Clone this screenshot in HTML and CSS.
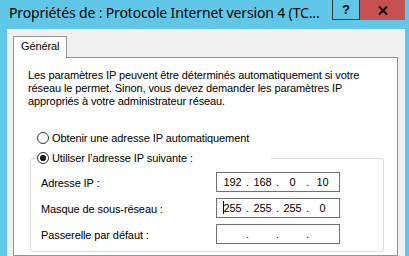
FILE: index.html
```html
<!DOCTYPE html>
<html lang="fr">
<head>
<meta charset="utf-8">
<title>Propriétés</title>
<link rel="stylesheet" href="styles.css">
</head>
<body>
<div class="window">
  <div class="titlebar">
    <div class="title">Propriétés de : Protocole Internet version 4 (TC...</div>
    <div class="buttons">
      <div class="btn help">?</div>
      <div class="btn close">
        <svg width="10" height="9" viewBox="0 0 10 9"><path d="M1 0.5 L9 8.5 M9 0.5 L1 8.5" stroke="#000" stroke-width="2" fill="none"/></svg>
      </div>
    </div>
  </div>
  <div class="client">
    <div class="tabs"><div class="tab">Général</div></div>
    <div class="page">
      <p class="intro">Les paramètres IP peuvent être déterminés automatiquement si votre<br>réseau le permet. Sinon, vous devez demander les paramètres IP<br>appropriés à votre administrateur réseau.</p>
      <div class="radio-row first"><span class="radio"></span><span>Obtenir une adresse IP automatiquement</span></div>
      <fieldset class="group">
        <legend class="legend"><span class="radio-row"><span class="radio checked"></span><span>Utiliser l’adresse IP suivante :</span></span></legend>
        <div class="field">
          <span class="label">Adresse IP :</span>
          <div class="ipbox"><span class="seg">192</span><span class="dot">.</span><span class="seg">168</span><span class="dot">.</span><span class="seg">0</span><span class="dot">.</span><span class="seg">10</span></div>
        </div>
        <div class="field">
          <span class="label">Masque de sous-réseau :</span>
          <div class="ipbox"><span class="seg"><span class="caret"></span>255</span><span class="dot">.</span><span class="seg">255</span><span class="dot">.</span><span class="seg">255</span><span class="dot">.</span><span class="seg">0</span></div>
        </div>
        <div class="field">
          <span class="label">Passerelle par défaut :</span>
          <div class="ipbox"><span class="seg"></span><span class="dot">.</span><span class="seg"></span><span class="dot">.</span><span class="seg"></span><span class="dot">.</span><span class="seg"></span></div>
        </div>
      </fieldset>
    </div>
  </div>
</div>
</body>
</html>
```
FILE: styles.css
```css
* { box-sizing: border-box; }
html, body { margin: 0; padding: 0; }
body {
  width: 409px;
  height: 256px;
  overflow: hidden;
  background: #60c7e8;
  font-family: "Liberation Sans", Arial, sans-serif;
  font-size: 11px;
  letter-spacing: -0.1px;
  color: #000;
}
.window {
  width: 409px;
  height: 256px;
  background: #60c7e8;
  display: flex;
  flex-direction: column;
  padding: 0 4px 0 7px;
}
.titlebar {
  height: 29px;
  flex: none;
  display: flex;
  align-items: flex-start;
  justify-content: space-between;
}
.title {
  font-family: "Noto Sans", "Liberation Sans", sans-serif;
  font-size: 14px;
  letter-spacing: -0.15px;
  line-height: 20px;
  padding: 3px 0 0 2px;
  white-space: nowrap;
  color: #000;
}
.buttons { display: flex; }
.btn {
  height: 20px;
  display: flex;
  align-items: center;
  justify-content: center;
}
.help {
  width: 28px;
  border: 1px solid #3a3a3a;
  border-top: 0;
  font-weight: bold;
  font-size: 13px;
  letter-spacing: 0;
}
.close {
  width: 45px;
  background: #c75050;
}
.client {
  flex: 1;
  background: #f0f0f0;
  padding: 7px 7px 0 6px;
  display: flex;
  flex-direction: column;
}
.tabs {
  display: flex;
  height: 21px;
  flex: none;
}
.tab {
  position: relative;
  z-index: 1;
  width: 54px;
  height: 22px;
  border: 1px solid #939393;
  border-bottom: 0;
  background: #fff;
  padding-left: 7px;
  line-height: 19px;
}
.page {
  flex: 1;
  background: #fff;
  border: 1px solid #939393;
  padding: 11px 13px 0 14px;
}
.intro {
  margin: 0;
  line-height: 13px;
  white-space: nowrap;
}
.radio-row {
  display: flex;
  align-items: center;
  height: 20px;
  gap: 3px;
  white-space: nowrap;
}
.radio-row.first {
  margin: 20px 0 0 9px;
}
.radio {
  width: 12px;
  height: 12px;
  flex: none;
  border-radius: 50%;
  border: 1px solid #333;
  background: #fff;
}
.radio.checked {
  background: radial-gradient(circle, #1a1a1a 0 2.8px, #fff 3.4px);
}
.group {
  margin: 0 0 0 2px;
  border: 1px solid #d9dee3;
  border-radius: 3px;
  padding: 4px 0 7px 5px;
  min-width: 0;
}
.legend {
  width: 235px;
  padding: 0 0 0 1px;
  background: #fff;
}
.field {
  display: flex;
  align-items: center;
  height: 20px;
}
.field + .field { margin-top: 6px; }
.label {
  width: 175px;
  margin-left: 5px;
  flex: none;
  padding-top: 2px;
}
.ipbox {
  width: 124px;
  height: 20px;
  border: 1px solid #707070;
  display: flex;
  align-items: center;
  padding-left: 3px;
  line-height: 18px;
}
.seg {
  width: 25px;
  text-align: center;
}
.dot {
  width: 5px;
  text-align: center;
}
.caret {
  display: inline-block;
  width: 1px;
  height: 13px;
  margin-right: -1px;
  background: #000;
  vertical-align: -2px;
}
```
